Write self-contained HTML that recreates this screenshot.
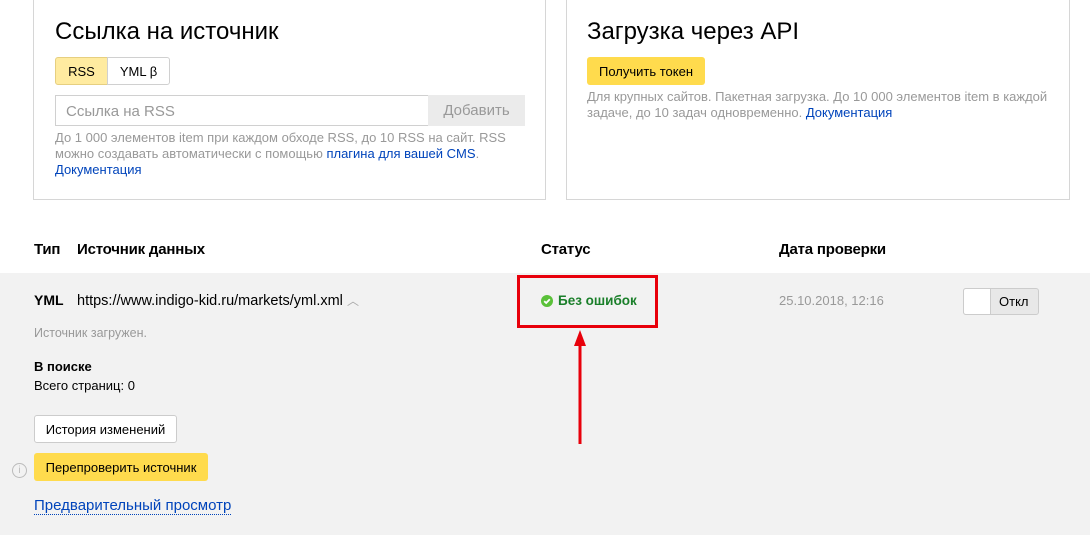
<!DOCTYPE html>
<html><head><meta charset="utf-8"><style>
*{margin:0;padding:0;box-sizing:border-box}
body{width:1090px;height:553px;background:#fff;font-family:"Liberation Sans",sans-serif;position:relative;overflow:hidden;color:#000}
.a{position:absolute;white-space:nowrap}
.card{position:absolute;border:1px solid #d6d6d6;border-top:none;background:#fff}
.h{font-size:24px;color:#000}
.small{font-size:13px;color:#999;line-height:16px}
a,.lnk{color:#04b;text-decoration:none}
.btn{position:absolute;border-radius:3px;font-size:13px;display:flex;align-items:center;justify-content:center}
.th{font-size:15px;font-weight:bold;letter-spacing:-0.2px}
</style></head><body>
<div class="card" style="left:33px;top:-2px;width:513px;height:202px"></div>
<div class="card" style="left:566px;top:-2px;width:504px;height:202px"></div>

<div class="a h" style="left:55px;top:18px">Ссылка на источник</div>
<div class="btn" style="left:55px;top:57px;width:53px;height:28px;background:#ffeba0;border:1px solid #e6cf80;border-radius:3px 0 0 3px">RSS</div>
<div class="btn" style="left:107px;top:57px;width:63px;height:28px;background:#fff;border:1px solid #d0d0d0;border-radius:0 3px 3px 0">YML β</div>
<div class="a" style="left:55px;top:95px;width:374px;height:31px;border:1px solid #d0d0d0;font-size:15px;color:#999;padding:7px 10px">Ссылка на RSS</div>
<div class="btn" style="left:428px;top:95px;width:97px;height:31px;background:#ebebeb;color:#999;font-size:15px;border-radius:0">Добавить</div>
<div class="a small" style="left:55px;top:130px">До 1 000 элементов item при каждом обходе RSS, до 10 RSS на сайт. RSS<br>можно создавать автоматически с помощью <span class="lnk">плагина для вашей CMS</span>.<br><span class="lnk">Документация</span></div>

<div class="a h" style="left:587px;top:18px">Загрузка через API</div>
<div class="btn" style="left:587px;top:57px;width:118px;height:28px;background:#ffdb4d">Получить токен</div>
<div class="a small" style="left:587px;top:89px">Для крупных сайтов. Пакетная загрузка. До 10 000 элементов item в каждой<br>задаче, до 10 задач одновременно. <span class="lnk">Документация</span></div>

<div class="a th" style="left:34px;top:241px">Тип</div>
<div class="a th" style="left:77px;top:241px">Источник данных</div>
<div class="a th" style="left:541px;top:241px">Статус</div>
<div class="a th" style="left:779px;top:241px">Дата проверки</div>

<div class="a" style="left:0;top:273px;width:1090px;height:262px;background:#f2f2f2"></div>
<div class="a" style="left:34px;top:292px;font-size:14px;font-weight:bold">YML</div>
<div class="a" style="left:77px;top:292px;font-size:14.5px">https://www.indigo-kid.ru/markets/yml.xml <span style="color:#aaa;font-size:12px">︿</span></div>
<div class="a" style="left:34px;top:326px;font-size:12.5px;color:#999">Источник загружен.</div>
<div class="a" style="left:34px;top:359px;font-size:13px;font-weight:bold">В поиске</div>
<div class="a" style="left:34px;top:378px;font-size:13px">Всего страниц: 0</div>
<div class="btn" style="left:34px;top:415px;width:143px;height:28px;background:#fff;border:1px solid #ccc">История изменений</div>
<div class="a" style="left:12px;top:463px;width:15px;height:15px;border:1px solid #bbb;border-radius:50%;color:#bbb;font-size:10px;text-align:center;line-height:13px">i</div>
<div class="btn" style="left:34px;top:453px;width:174px;height:28px;background:#ffdb4d">Перепроверить источник</div>
<div class="a" style="left:34px;top:497px;font-size:15px;color:#04b;border-bottom:1px dotted #04b;line-height:17px">Предварительный просмотр</div>

<div class="a" style="left:541px;top:295px;width:12px;height:12px;border-radius:50%;background:#5ac139"><svg width="12" height="12" viewBox="0 0 12 12" style="display:block"><path d="M3.2 6.2 L5.2 8 L8.8 4.2" stroke="#fff" stroke-width="1.8" fill="none"/></svg></div>
<div class="a" style="left:558px;top:293px;font-size:13.5px;font-weight:bold;color:#1a7f2a">Без ошибок</div>
<div class="a" style="left:517px;top:275px;width:141px;height:53px;border:3px solid #e8000b"></div>
<svg class="a" style="left:570px;top:328px" width="20" height="118"><path d="M10 2 L4 18 L16 18 Z" fill="#e8000b"/><line x1="10" y1="14" x2="10" y2="116" stroke="#e8000b" stroke-width="3"/></svg>

<div class="a" style="left:779px;top:293px;font-size:13px;color:#999">25.10.2018, 12:16</div>
<div class="a" style="left:963px;top:288px;width:76px;height:27px;background:#e8e8e8;border:1px solid #ccc;border-radius:3px"></div>
<div class="a" style="left:963px;top:288px;width:28px;height:27px;background:#fff;border:1px solid #ccc;border-radius:3px 0 0 3px"></div>
<div class="a" style="left:999px;top:294px;font-size:13px">Откл</div>
</body></html>
